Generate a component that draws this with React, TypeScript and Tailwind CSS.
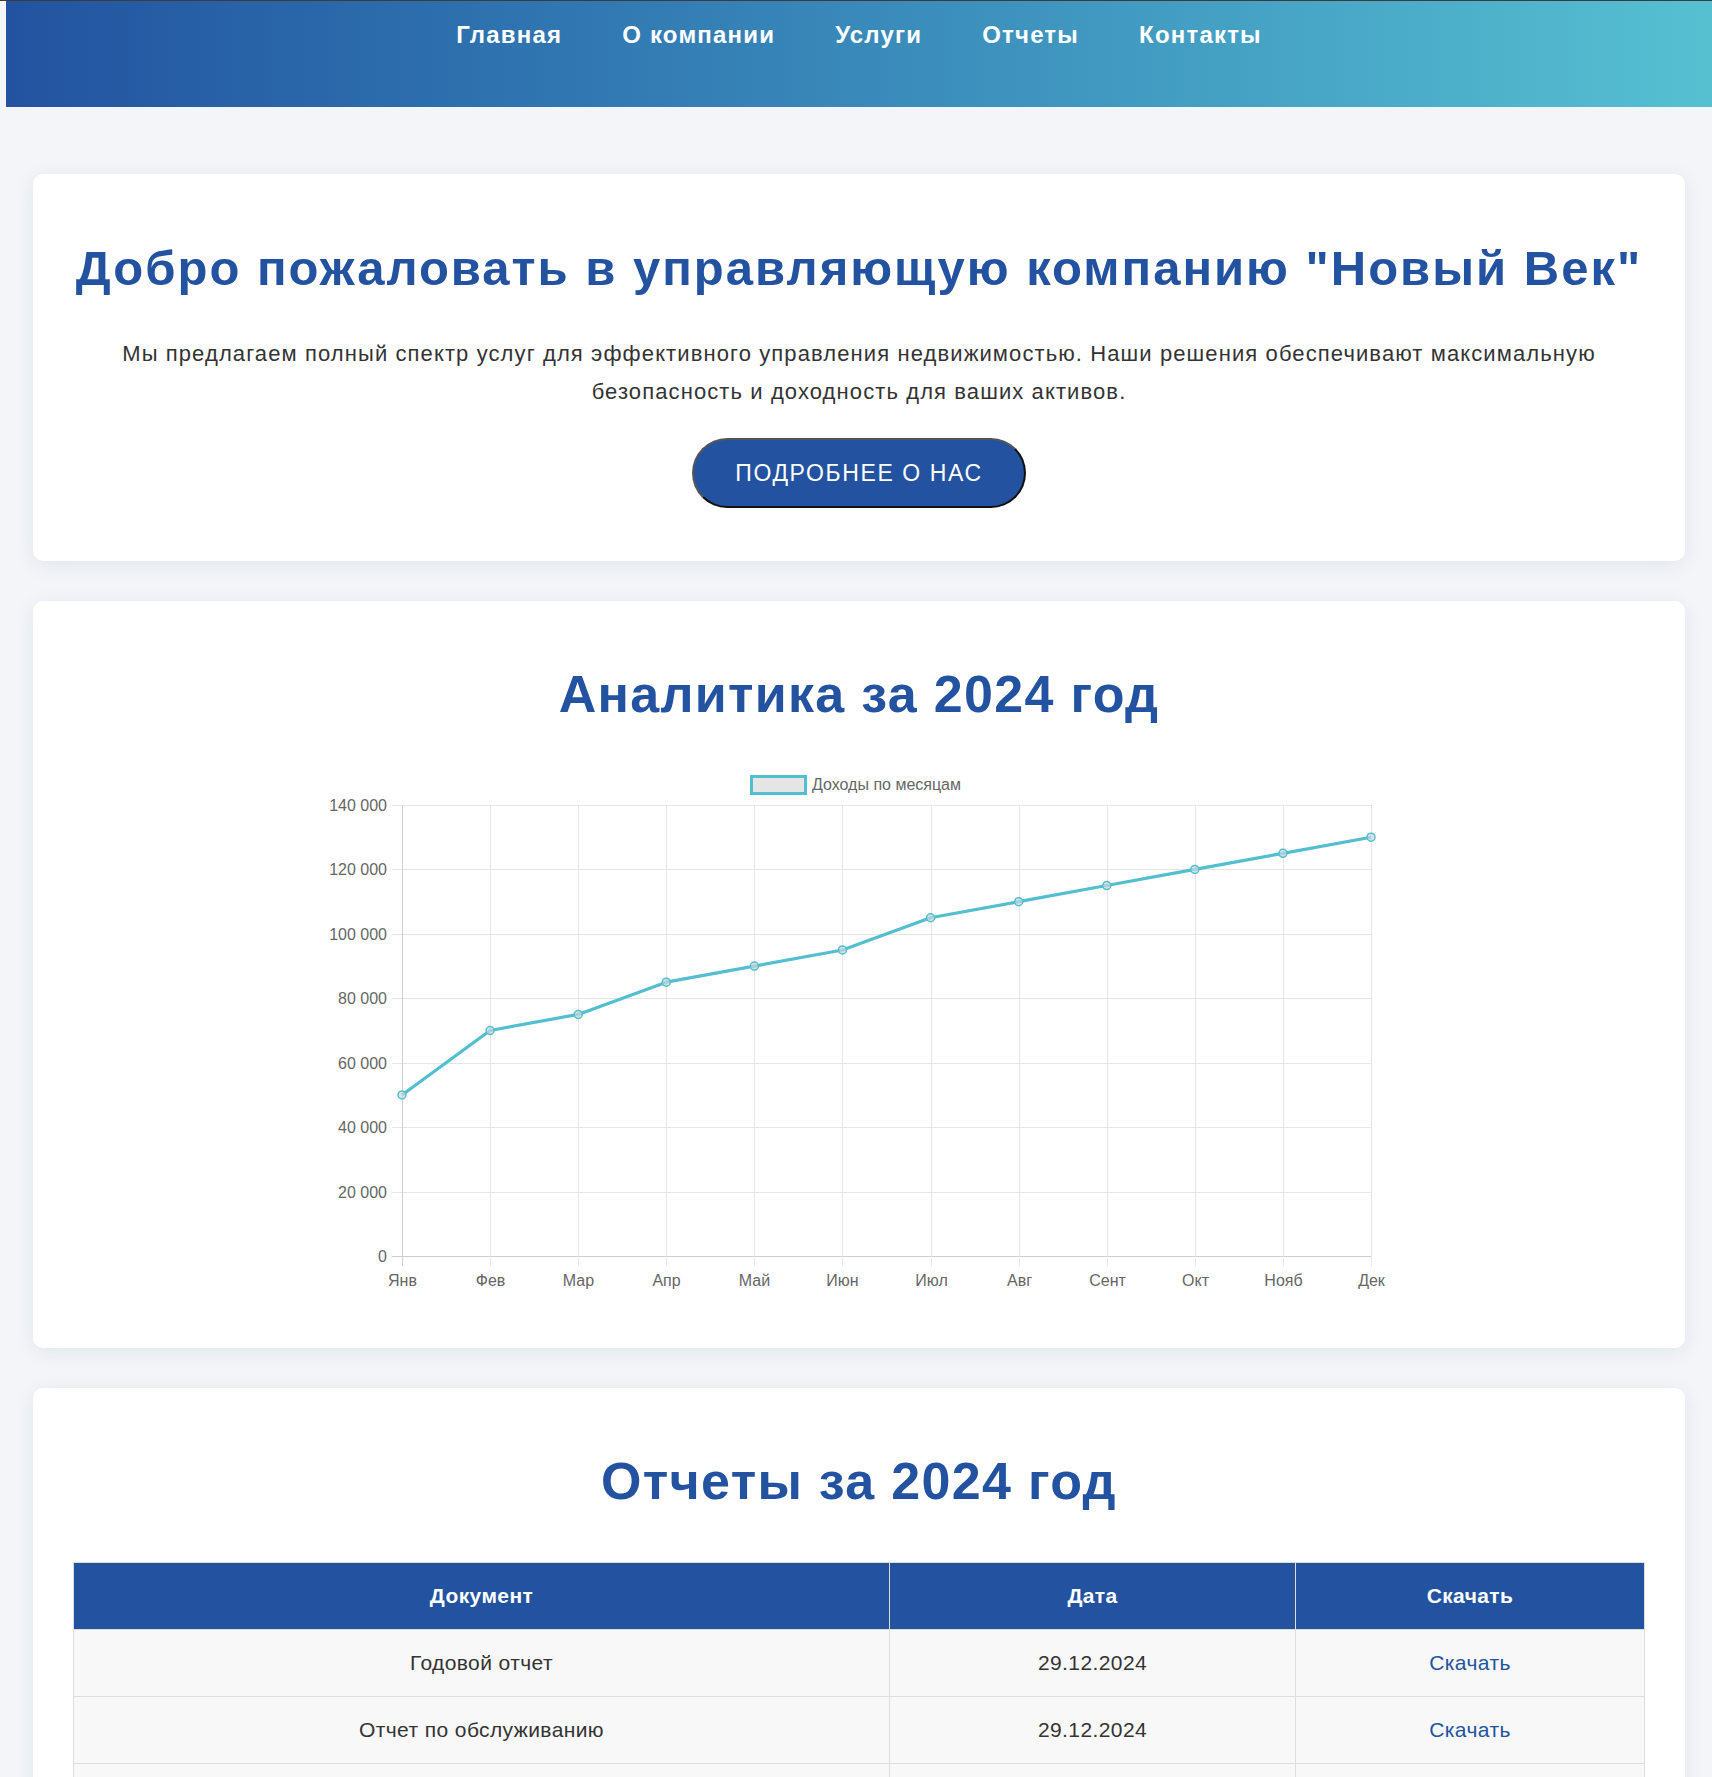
import React from "react";

const navItems = ["Главная", "О компании", "Услуги", "Отчеты", "Контакты"];

const months = ["Янв", "Фев", "Мар", "Апр", "Май", "Июн", "Июл", "Авг", "Сент", "Окт", "Нояб", "Дек"];
const income = [50000, 70000, 75000, 85000, 90000, 95000, 105000, 110000, 115000, 120000, 125000, 130000];

const reports = [
  { name: "Годовой отчет", date: "29.12.2024" },
  { name: "Отчет по обслуживанию", date: "29.12.2024" },
  { name: "Финансовый отчет", date: "29.12.2024" },
];

// chart geometry (svg coords)
const X0 = 93;
const X1 = 1062;
const Y0 = 44;
const Y1 = 495;
const MAX = 140000;
const xAt = (i: number) => X0 + ((X1 - X0) / 11) * i;
const yAt = (v: number) => Y1 - (v / MAX) * (Y1 - Y0);

function IncomeChart() {
  const ticks = [0, 20000, 40000, 60000, 80000, 100000, 120000, 140000];
  const points = income.map((v, i) => `${xAt(i)},${yAt(v)}`).join(" ");

  return (
    <svg width="1100" height="540" viewBox="0 0 1100 540" className="mx-auto mt-[37px] block">
      {/* legend */}
      <rect x="442.5" y="15.5" width="54" height="17" fill="#e5e5e5" stroke="#52bed0" strokeWidth="3" />
      <text x="503" y="28.5" fontSize="16" fill="#666" fontFamily="Liberation Sans, Arial, sans-serif">
        Доходы по месяцам
      </text>

      {/* horizontal grid + y labels */}
      {ticks.map((t) => {
        const y = Math.round(yAt(t)) + 0.5;
        return (
          <g key={t}>
            <line x1={X0 - 10} x2={X1} y1={y} y2={y} stroke={t === 0 ? "#cfcfcf" : "#e6e6e6"} strokeWidth="1" />
            <text
              x={X0 - 15}
              y={y + 5.5}
              textAnchor="end"
              fontSize="16"
              fill="#666"
              fontFamily="Liberation Sans, Arial, sans-serif"
            >
              {t === 0 ? "0" : `${t / 1000} 000`}
            </text>
          </g>
        );
      })}

      {/* vertical grid + x labels */}
      {months.map((m, i) => {
        const x = Math.round(xAt(i)) + 0.5;
        return (
          <g key={m}>
            <line x1={x} x2={x} y1={Y0} y2={Y1 + 10} stroke={i === 0 ? "#cfcfcf" : "#e6e6e6"} strokeWidth="1" />
            <text
              x={x}
              y={Y1 + 30}
              textAnchor="middle"
              fontSize="16"
              fill="#666"
              fontFamily="Liberation Sans, Arial, sans-serif"
            >
              {m}
            </text>
          </g>
        );
      })}

      <polyline points={points} fill="none" stroke="#52bed0" strokeWidth="3.2" strokeLinejoin="round" />
      {income.map((v, i) => (
        <circle key={i} cx={xAt(i)} cy={yAt(v)} r="4" fill="rgba(205,215,218,0.7)" stroke="#52bed0" strokeWidth="1.5" />
      ))}
    </svg>
  );
}

export default function App() {
  return (
    <div className="min-h-screen bg-[#f3f5f9] font-['Liberation_Sans',Arial,sans-serif]">
      <div className="h-px bg-[#3c3c3c]" />
      <div className="pl-[6px]">
        <header className="h-[106px] bg-linear-to-r from-[#2353a0] to-[#56c0d1] pt-[20px]">
          <nav>
            <ul className="flex justify-center gap-[60px]">
              {navItems.map((item) => (
                <li key={item}>
                  <a href="#" className="text-[24px] font-bold leading-[28px] tracking-[1.2px] text-white">
                    {item}
                  </a>
                </li>
              ))}
            </ul>
          </nav>
        </header>

        <main className="flex flex-col gap-10 px-[27px] pt-[67px] pb-10">
          <section className="rounded-[10px] bg-white px-10 pt-10 pb-[53px] text-center shadow-[0_4px_20px_rgba(30,40,80,0.08)]">
            <h1 className="mt-[26px] text-[49px] leading-[56px] font-bold tracking-[2px] text-[#2353a0]">
              Добро пожаловать в управляющую компанию "Новый Век"
            </h1>
            <p className="mt-[39px] text-[22px] leading-[38px] tracking-[1.1px] text-[#333]">
              Мы предлагаем полный спектр услуг для эффективного управления недвижимостью. Наши решения обеспечивают
              максимальную безопасность и доходность для ваших активов.
            </p>
            <button className="mt-[27px] h-[70px] rounded-full border-2 border-[#555] border-r-[#111] border-b-[#111] bg-[#2353a0] px-[41px] text-[23px] leading-[26px] tracking-[1.6px] text-white uppercase">
              Подробнее о нас
            </button>
          </section>

          <section className="rounded-[10px] bg-white px-10 pt-10 pb-[47px] text-center shadow-[0_4px_20px_rgba(30,40,80,0.08)]">
            <h2 className="mt-[23px] text-[52px] leading-[60px] font-bold tracking-[1.3px] text-[#2353a0]">
              Аналитика за 2024 год
            </h2>
            <IncomeChart />
          </section>

          <section className="rounded-[10px] bg-white px-10 pt-10 pb-10 text-center shadow-[0_4px_20px_rgba(30,40,80,0.08)]">
            <h2 className="mt-[23px] text-[52px] leading-[60px] font-bold tracking-[1.3px] text-[#2353a0]">
              Отчеты за 2024 год
            </h2>
            <table className="mt-[51px] w-full border-collapse text-[21px] leading-[24px] tracking-[0.4px]">
              <thead>
                <tr className="bg-[#2353a0] text-white">
                  <th className="w-[816px] border border-[#ddd] py-[21px] font-bold">Документ</th>
                  <th className="w-[406px] border border-[#ddd] py-[21px] font-bold">Дата</th>
                  <th className="border border-[#ddd] py-[21px] font-bold">Скачать</th>
                </tr>
              </thead>
              <tbody>
                {reports.map((r) => (
                  <tr key={r.name} className="bg-[#f8f8f8] text-[#333]">
                    <td className="border border-[#ddd] py-[21px]">{r.name}</td>
                    <td className="border border-[#ddd] py-[21px]">{r.date}</td>
                    <td className="border border-[#ddd] py-[21px]">
                      <a href="#" className="text-[#2353a0]">
                        Скачать
                      </a>
                    </td>
                  </tr>
                ))}
              </tbody>
            </table>
          </section>
        </main>
      </div>
    </div>
  );
}
